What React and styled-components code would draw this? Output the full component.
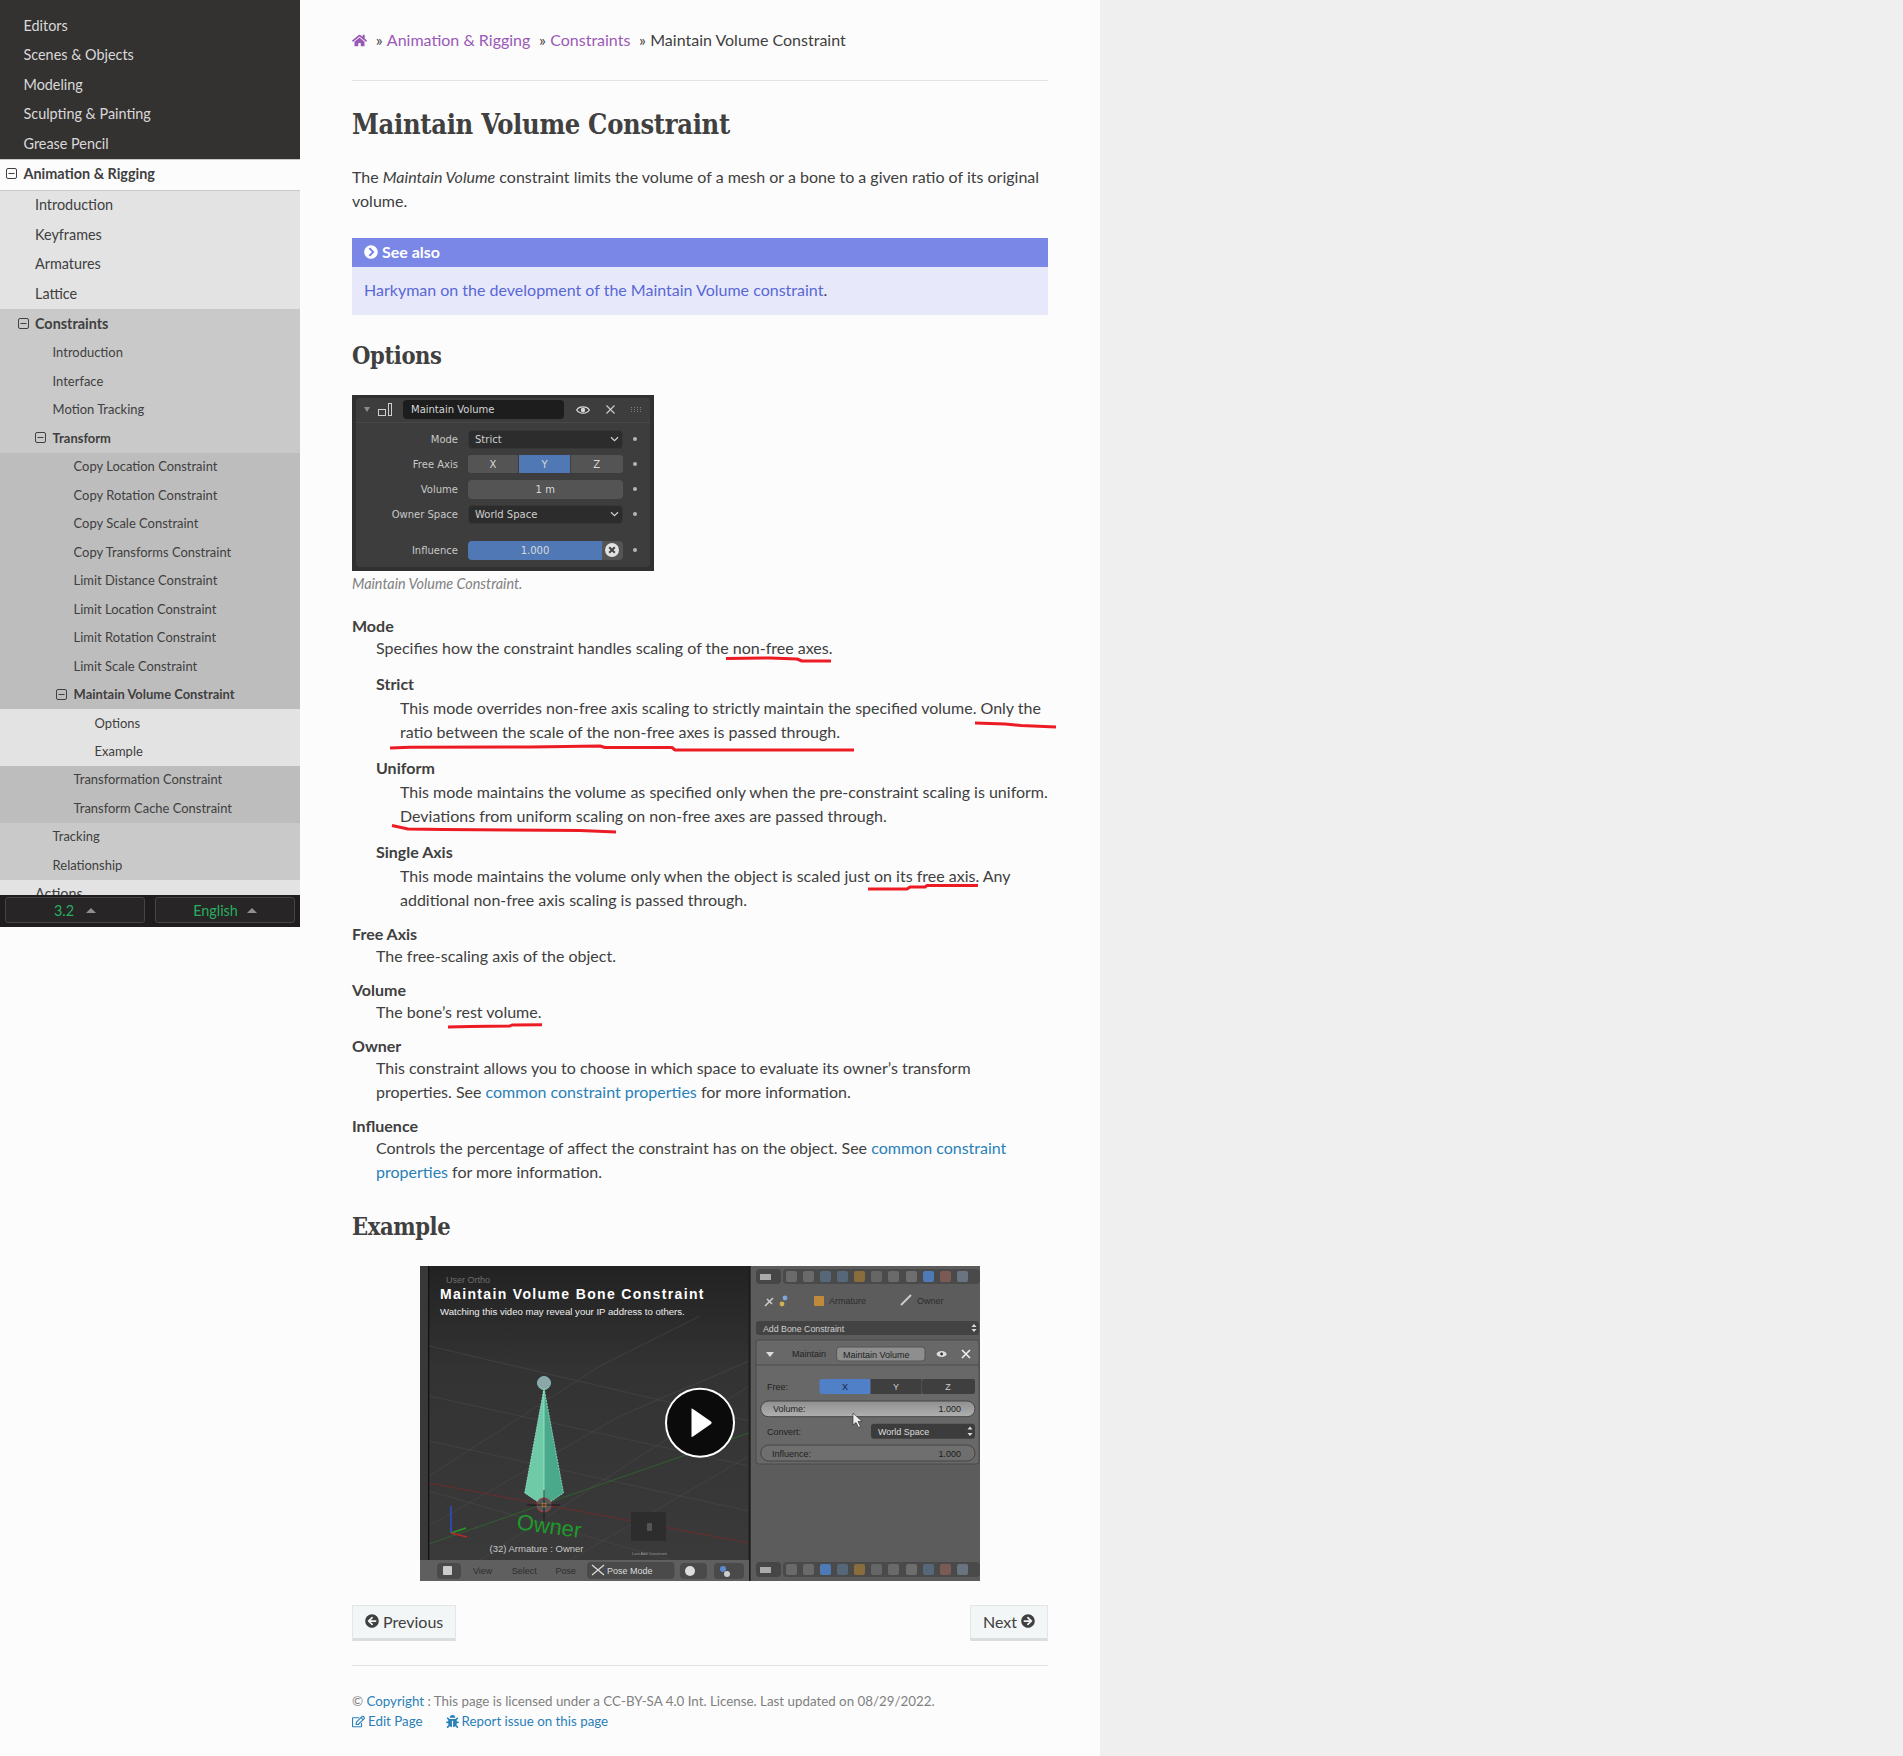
import React from "react";
import styled, { createGlobalStyle } from "styled-components";
import { FaHome, FaChevronCircleRight, FaArrowCircleLeft, FaArrowCircleRight, FaRegEdit, FaBug } from "react-icons/fa";

const Global = createGlobalStyle`
  html, body { margin: 0; padding: 0; background: #fcfcfc; }
  body { font-family: Lato, "Liberation Sans", sans-serif; font-size: 16px; color: #404040; }
`;

const Page = styled.div`
  display: flex;
  align-items: flex-start;
  min-height: 1756px;
`;

/* ---------- sidebar ---------- */
const Sidebar = styled.nav`
  display: flex;
  flex-direction: column;
  flex: 0 0 300px;
  width: 300px;
  height: 927px;
`;
const NavScroll = styled.div`
  flex: 1;
  min-height: 0;
  overflow: hidden;
  padding-top: 11px;
  background: #343131;
`;
const styles = {
  dark: { bg: "#343131", c: "#d9d9d9", fs: 14.4, pl: 23.5, pt: 5.5, pb: 6.1 },
  l1cur: { bg: "#fcfcfc", c: "#404040", fs: 14.4, pl: 23.5, pt: 5, pb: 6.7, b: 1, border: 1 },
  l2: { bg: "#e3e3e3", c: "#404040", fs: 14.4, pl: 35, pt: 5.5, pb: 6.1 },
  l2cur: { bg: "#c9c9c9", c: "#404040", fs: 14.4, pl: 35, pt: 5.5, pb: 6.1, b: 1 },
  l3: { bg: "#c9c9c9", c: "#404040", fs: 12.96, pl: 52.6, pt: 4.8, pb: 5.68 },
  l3cur: { bg: "#c9c9c9", c: "#404040", fs: 12.96, pl: 52.6, pt: 4.8, pb: 5.68, b: 1 },
  l4: { bg: "#bdbdbd", c: "#404040", fs: 12.96, pl: 73.6, pt: 4.8, pb: 5.68 },
  l4cur: { bg: "#bdbdbd", c: "#404040", fs: 12.96, pl: 73.6, pt: 4.8, pb: 5.68, b: 1 },
  l5: { bg: "#e3e3e3", c: "#404040", fs: 12.96, pl: 94.6, pt: 4.8, pb: 5.68 },
};
const NavRow = styled.a`
  display: flex;
  align-items: center;
  line-height: 18px;
  white-space: nowrap;
  background: ${(p) => styles[p.$v].bg};
  color: ${(p) => styles[p.$v].c};
  font-size: ${(p) => styles[p.$v].fs}px;
  font-weight: ${(p) => (styles[p.$v].b ? 700 : 400)};
  padding: ${(p) => styles[p.$v].pt}px 8px ${(p) => styles[p.$v].pb}px ${(p) => styles[p.$v].pl}px;
  border-top: ${(p) => (styles[p.$v].border ? "1px solid #c9c9c9" : "0")};
  border-bottom: ${(p) => (styles[p.$v].border ? "1px solid #c9c9c9" : "0")};
`;
const Expander = styled.svg`
  width: 11px;
  height: 11px;
  margin-left: -17.5px;
  margin-right: 6.5px;
  flex: none;
`;
const MinusBox = () => (
  <Expander viewBox="0 0 11 11" fill="none" stroke="#404040" strokeWidth="1">
    <rect x="0.5" y="0.5" width="10" height="10" rx="1.5" />
    <path d="M2.5 5.5H8.5" />
  </Expander>
);
const VersionBar = styled.div`
  flex: 0 0 32px;
  display: flex;
  gap: 10px;
  padding: 2px 5px 4px;
  box-sizing: border-box;
  background: #1f1d1d;
`;
const VersionButton = styled.div`
  flex: 1;
  display: flex;
  align-items: center;
  justify-content: center;
  gap: ${(p) => p.$gap}px;
  background: #272525;
  border: 1px solid #454545;
  border-radius: 3px;
  color: #27ae60;
  font-size: 14.4px;
`;
const Caret = styled.span`
  width: 0;
  height: 0;
  border-left: 5px solid transparent;
  border-right: 5px solid transparent;
  border-bottom: 5px solid #8f8f8f;
`;

const navItems = [
  ["Editors", "dark"], ["Scenes & Objects", "dark"], ["Modeling", "dark"], ["Sculpting & Painting", "dark"], ["Grease Pencil", "dark"],
  ["Animation & Rigging", "l1cur", 1],
  ["Introduction", "l2"], ["Keyframes", "l2"], ["Armatures", "l2"], ["Lattice", "l2"],
  ["Constraints", "l2cur", 1],
  ["Introduction", "l3"], ["Interface", "l3"], ["Motion Tracking", "l3"],
  ["Transform", "l3cur", 1],
  ["Copy Location Constraint", "l4"], ["Copy Rotation Constraint", "l4"], ["Copy Scale Constraint", "l4"], ["Copy Transforms Constraint", "l4"],
  ["Limit Distance Constraint", "l4"], ["Limit Location Constraint", "l4"], ["Limit Rotation Constraint", "l4"], ["Limit Scale Constraint", "l4"],
  ["Maintain Volume Constraint", "l4cur", 1],
  ["Options", "l5"], ["Example", "l5"],
  ["Transformation Constraint", "l4"], ["Transform Cache Constraint", "l4"],
  ["Tracking", "l3"], ["Relationship", "l3"],
  ["Actions", "l2"],
];

/* ---------- main ---------- */
const Content = styled.main`
  position: relative;
  flex: 0 0 800px;
  width: 800px;
  box-sizing: border-box;
  padding: 28px 52px 0;
  background: #fcfcfc;
  align-self: stretch;
`;
const Filler = styled.div`
  flex: 1;
  align-self: stretch;
  background: #efefef;
`;
const Crumbs = styled.div`
  display: flex;
  align-items: center;
  line-height: 24px;
  white-space: pre;
`;
const CrumbLink = styled.a`
  color: #9b59b6;
`;
const HomeIcon = styled(FaHome)`
  display: block;
`;
const CrumbSep = styled.span`
  margin: 0 4.3px 0 8.7px;
`;
const Rule = styled.hr`
  border: 0;
  border-top: 1px solid #e1e4e5;
  margin: ${(p) => p.$top}px 0 0;
`;
const H1 = styled.h1`
  font-family: "DejaVu Serif Condensed", "DejaVu Serif", serif;
  font-stretch: condensed;
  font-size: 27px;
  letter-spacing: -0.3px;
  line-height: 34px;
  font-weight: 700;
  margin: 27px 0 0;
  white-space: nowrap;
`;
const H2 = styled.h2`
  font-family: "DejaVu Serif Condensed", "DejaVu Serif", serif;
  font-stretch: condensed;
  font-size: 23.5px;
  letter-spacing: -0.4px;
  line-height: 30px;
  font-weight: 700;
  margin: ${(p) => p.$top}px 0 ${(p) => p.$bottom}px;
`;
const Para = styled.p`
  line-height: 24px;
  margin: 23px 0 0;
`;
const Admonition = styled.aside`
  margin-top: 25px;
  background: #e7e9fa;
`;
const AdmonitionTitle = styled.div`
  display: flex;
  align-items: center;
  gap: 4px;
  height: 29px;
  box-sizing: border-box;
  padding: 0 0 2px 12px;
  background: #7a87e6;
  color: #fff;
  font-weight: 700;
  font-size: 16px;
`;
const AdmonitionBody = styled.div`
  padding: 11px 12px 13px;
  line-height: 24px;
`;
const AdLink = styled.a`
  color: #5967d6;
`;
const Caption = styled.div`
  margin-top: 4px;
  font-style: italic;
  font-size: 14.4px;
  line-height: 18px;
  color: #808080;
`;
const DefList = styled.dl`
  margin: ${(p) => p.$top}px 0 0;
`;
const Term = styled.dt`
  font-weight: 700;
  line-height: 20px;
`;
const Desc = styled.dd`
  margin: ${(p) => (p.$nested ? "2px 0 14px 24px" : "0 0 12px 24px")};
  line-height: 24px;
  &:last-child { margin-bottom: ${(p) => (p.$nested ? "0" : "12px")}; }
`;
const Inner = styled.dl`
  margin: 14px 0 0;
`;
const Link = styled.a`
  color: #2980b9;
`;
const VideoFrame = styled.svg`
  display: block;
  width: 560px;
  height: 315px;
  margin: 0 auto;
`;
const NavButtons = styled.div`
  display: flex;
  justify-content: space-between;
  margin-top: 24px;
`;
const PagerButton = styled.a`
  display: flex;
  align-items: center;
  gap: 4px;
  box-sizing: border-box;
  height: 36px;
  padding: 0 12px 5px;
  background: #f3f6f6;
  color: #404040;
  border: 1px solid #e3e6e6;
  border-bottom: 0;
  box-shadow: inset 0 -3px 0 #d9dddd;
  font-size: 16px;
`;
const Footer = styled.footer`
  margin-top: 25.3px;
  font-size: 13.33px;
  line-height: 20px;
  color: #808080;
`;
const FootLinks = styled.div`
  display: flex;
  gap: 23px;
`;
const FootLink = styled.a`
  display: inline-flex;
  align-items: center;
  gap: 3px;
  color: #2980b9;
`;
const Scribbles = styled.svg`
  position: absolute;
  left: 0;
  top: 0;
  width: 800px;
  height: 1756px;
  pointer-events: none;
`;

/* ---------- blender panel ---------- */
const Blender = styled.div`
  width: 302px;
  height: 176px;
  box-sizing: border-box;
  padding: 3px 4px 4px;
  background: #303030;
  font-family: "DejaVu Sans", sans-serif;
  font-size: 10px;
  color: #d9d9d9;
`;
const BlenderInner = styled.div`
  height: 100%;
  background: #3d3d3d;
  border-radius: 3px;
`;
const BlenderHeader = styled.div`
  display: flex;
  align-items: center;
  height: 25px;
  border-bottom: 1px solid #474747;
  box-sizing: border-box;
  padding-left: 8px;
`;
const BlenderName = styled.div`
  width: 161px;
  height: 19px;
  box-sizing: border-box;
  margin-left: 11px;
  padding-left: 8px;
  line-height: 19px;
  background: #1d1d1d;
  border-radius: 4px;
  color: #d6d6d6;
`;
const HeadIcon = styled.svg`
  flex: none;
  margin-left: ${(p) => p.$ml || 0}px;
`;
const BlenderRows = styled.div`
  display: flex;
  flex-direction: column;
  gap: 6px;
  padding-top: 7px;
`;
const BlenderRow = styled.div`
  display: grid;
  grid-template-columns: 102px 154.5px 20px;
  column-gap: 10px;
  align-items: center;
  height: 19px;
  margin-top: ${(p) => p.$mt || 0}px;
`;
const BlenderLabel = styled.span`
  text-align: right;
  color: #c8c8c8;
`;
const Dot = styled.span`
  width: 4px;
  height: 4px;
  border-radius: 50%;
  background: #b5b5b5;
`;
const Dropdown = styled.div`
  display: flex;
  align-items: center;
  justify-content: space-between;
  height: 19px;
  box-sizing: border-box;
  padding: 0 3px 0 6px;
  background: #2c2c2c;
  border: 1px solid #373737;
  border-radius: 4px;
  color: #cfcfcf;
`;
const Segments = styled.div`
  display: grid;
  grid-template-columns: 50px 51px 1fr;
  gap: 1px;
  height: 18px;
  border-radius: 3px;
  overflow: hidden;
`;
const Segment = styled.div`
  display: flex;
  align-items: center;
  justify-content: center;
  background: ${(p) => (p.$on ? "#5078b5" : "#545454")};
`;
const NumberField = styled.div`
  display: flex;
  align-items: center;
  justify-content: center;
  height: 19px;
  background: #545454;
  border-radius: 4px;
`;
const SliderField = styled.div`
  display: grid;
  grid-template-columns: 134px 1fr;
  height: 19px;
  border-radius: 4px;
  overflow: hidden;
`;
const SliderFill = styled.div`
  display: flex;
  align-items: center;
  justify-content: center;
  background: #5078b5;
`;
const SliderClear = styled.div`
  display: flex;
  align-items: center;
  justify-content: center;
  background: #545454;
`;

const Chevron = () => (
  <svg width="9" height="6" viewBox="0 0 9 6" fill="none" stroke="#d0d0d0" strokeWidth="1.2"><path d="M1 1.2L4.5 4.6L8 1.2" /></svg>
);

const BlenderPanel = () => (
  <Blender>
    <BlenderInner>
      <BlenderHeader>
        <svg width="6" height="5" viewBox="0 0 6 5"><path d="M0 0H6L3 5Z" fill="#8c8c8c" /></svg>
        <HeadIcon $ml={8} width="14" height="14" viewBox="0 0 14 14" fill="none" stroke="#cfcfcf">
          <rect x="0.5" y="6.5" width="7" height="6" />
          <rect x="10.5" y="0.5" width="3" height="12" />
        </HeadIcon>
        <BlenderName>Maintain Volume</BlenderName>
        <HeadIcon $ml={12} width="14" height="10" viewBox="0 0 14 10">
          <path d="M0.7 5C3 0.8 11 0.8 13.3 5C11 9.2 3 9.2 0.7 5Z" fill="none" stroke="#d8d8d8" strokeWidth="1.3" />
          <circle cx="7" cy="5" r="2.2" fill="#d8d8d8" />
        </HeadIcon>
        <HeadIcon $ml={16} width="9" height="9" viewBox="0 0 9 9" stroke="#cfcfcf" strokeWidth="1.1"><path d="M.5.5L8.5 8.5M8.5.5L.5 8.5" /></HeadIcon>
        <HeadIcon $ml={16} width="11" height="5" viewBox="0 0 11 5" fill="#7d7d7d">
          {[0, 3, 6, 9].flatMap((x) => [0, 2, 4].map((y) => <rect key={`${x}${y}`} x={x} y={y} width="1" height="1" />))}
        </HeadIcon>
      </BlenderHeader>
      <BlenderRows>
        <BlenderRow><BlenderLabel>Mode</BlenderLabel><Dropdown>Strict<Chevron /></Dropdown><Dot /></BlenderRow>
        <BlenderRow>
          <BlenderLabel>Free Axis</BlenderLabel>
          <Segments><Segment>X</Segment><Segment $on>Y</Segment><Segment>Z</Segment></Segments>
          <Dot />
        </BlenderRow>
        <BlenderRow><BlenderLabel>Volume</BlenderLabel><NumberField>1 m</NumberField><Dot /></BlenderRow>
        <BlenderRow><BlenderLabel>Owner Space</BlenderLabel><Dropdown>World Space<Chevron /></Dropdown><Dot /></BlenderRow>
        <BlenderRow $mt={11}>
          <BlenderLabel>Influence</BlenderLabel>
          <SliderField>
            <SliderFill>1.000</SliderFill>
            <SliderClear>
              <svg width="14" height="14" viewBox="0 0 14 14">
                <circle cx="7" cy="7" r="7" fill="#e2e2e2" />
                <path d="M4.2 4.2L9.8 9.8M9.8 4.2L4.2 9.8" stroke="#444" strokeWidth="2" />
              </svg>
            </SliderClear>
          </SliderField>
          <Dot />
        </BlenderRow>
      </BlenderRows>
    </BlenderInner>
  </Blender>
);

/* ---------- video poster drawing ---------- */
const toolbarXs = [371, 388, 405, 422, 439, 456, 473, 491, 508, 525, 542];
const toolColors = ["#6a6a6a", "#6a6a6a", "#56677a", "#56677a", "#8a6d3c", "#666", "#6a6a6a", "#6e6e6e", "#56677a", "#7a5a55", "#6a7480"];

const Toolbar = ({ y, active }) => (
  <g>
    <rect x="336" y={y - 7} width="25" height="15" rx="4" fill="#464646" />
    <rect x="340" y={y - 2} width="11" height="6" fill="#aaa" />
    <rect x="363" y={y - 7} width="197" height="15" rx="4" fill="#4a4a4a" />
    {toolbarXs.map((x, i) => (
      <rect key={x} x={x - 5} y={y - 5} width="11" height="11" rx="2" fill={i === active ? "#4f7ab8" : toolColors[i]} />
    ))}
  </g>
);

const VideoPoster = () => (
  <VideoFrame viewBox="0 0 560 315">
    <defs>
      <linearGradient id="topShade" x1="0" y1="0" x2="0" y2="1">
        <stop offset="0" stopColor="#222" />
        <stop offset="0.35" stopColor="#333" />
        <stop offset="1" stopColor="#3a3a3a" />
      </linearGradient>
      <linearGradient id="pill" x1="0" y1="0" x2="0" y2="1">
        <stop offset="0" stopColor="#8f8f8f" />
        <stop offset="1" stopColor="#b0b0b0" />
      </linearGradient>
    </defs>
    <rect width="560" height="315" fill="#5c5c5c" />
    <rect width="9" height="295" fill="#383838" />
    <rect x="9" width="320" height="294" fill="url(#topShade)" />
    <g stroke="#4a4a4a" strokeWidth="0.6" fill="none">
      <path d="M9 80L329 155M9 130L329 200M9 175L329 245M9 225L250 294" />
      <path d="M9 260L200 150L329 95M60 294L329 120M150 294L329 190M9 210L180 100L280 50" />
    </g>
    <path d="M9 217L329 277" stroke="#7a2a2a" strokeWidth="0.8" fill="none" />
    <path d="M9 278L329 167" stroke="#2f6a2f" strokeWidth="0.8" fill="none" />
    <rect x="8" width="1.3" height="294" fill="#111" />
    <rect x="328.6" width="2" height="315" fill="#1c1c1c" />

    <path d="M124 122L104.7 227L124 240Z" fill="#6fcaa8" />
    <path d="M124 122L143.5 227L124 240Z" fill="#4aa98a" />
    <path d="M124 122V240" stroke="#9fe8d0" strokeWidth="0.8" />
    <path d="M124 122L104.7 227L124 240L143.5 227Z" fill="none" stroke="#a8f0dc" strokeWidth="0.7" strokeDasharray="2 1" />
    <circle cx="124" cy="117" r="6.5" fill="#8fa6a8" stroke="#7fd8d0" strokeWidth="0.8" />
    <circle cx="124" cy="239" r="7" fill="#50595c" stroke="#a04040" strokeWidth="1.2" />
    <circle cx="124" cy="239" r="2.5" fill="#d68a3a" />
    <path d="M107 239H140M124 224V255" stroke="#111" strokeWidth="0.8" />

    <text x="96" y="263" transform="rotate(8 96 263)" fontFamily="Liberation Sans" fontSize="22" fill="#1f9a2a">Owner</text>
    <text x="69.5" y="286" fontFamily="Liberation Sans" fontSize="9.5" fill="#c8c8c8">(32) Armature : Owner</text>
    <path d="M31 267V240" stroke="#2a4fd0" strokeWidth="1.5" />
    <path d="M31 267L46 262" stroke="#2a9a2a" strokeWidth="1.5" />
    <path d="M31 267L47 271" stroke="#b52a2a" strokeWidth="1.5" />
    <rect x="211" y="246" width="35" height="29" fill="#2d2d2d" />
    <rect x="227" y="257" width="5" height="8" rx="1" fill="#555" />
    <text x="212" y="289" fontFamily="Liberation Sans" fontSize="4" fill="#999">Last Add Constraint</text>

    <text x="26" y="17" fontFamily="Liberation Sans" fontSize="9" fill="#6e6e6e">User Ortho</text>
    <text x="20" y="33" fontFamily="Liberation Sans" fontWeight="700" fontSize="14" letterSpacing="1.35" fill="#fff">Maintain Volume Bone Constraint</text>
    <text x="20" y="49" fontFamily="Liberation Sans" fontSize="9.6" fill="#eee">Watching this video may reveal your IP address to others.</text>

    {/* bottom bar, left */}
    <rect x="0" y="294" width="329" height="21" fill="#5f5f5f" />
    <rect x="17" y="297" width="24" height="16" rx="4" fill="#4a4a4a" />
    <rect x="23" y="300" width="9" height="9" rx="1" fill="#ccc" />
    <g fontFamily="Liberation Sans" fontSize="9" fill="#2e2e2e">
      <text x="53" y="308">View</text>
      <text x="91.7" y="308">Select</text>
      <text x="135.4" y="308">Pose</text>
    </g>
    <rect x="167" y="296" width="87.5" height="17" rx="4" fill="#4a4a4a" />
    <path d="M172 299L184 309M184 299L172 309" stroke="#ddd" strokeWidth="1.2" />
    <text x="187" y="308" fontFamily="Liberation Sans" fontSize="9" fill="#ddd">Pose Mode</text>
    <rect x="260" y="297" width="27" height="16" rx="4" fill="#4a4a4a" />
    <circle cx="270" cy="305" r="5" fill="#ddd" />
    <rect x="294" y="297" width="30" height="16" rx="4" fill="#4a4a4a" />
    <circle cx="303" cy="303" r="3" fill="#5c8ad0" />
    <circle cx="307" cy="308" r="3" fill="#cfcfcf" />

    {/* right panel */}
    <Toolbar y={10} active={8} />
    <Toolbar y={303} active={2} />
    <g fontFamily="Liberation Sans" fontSize="9" fill="#2c2c2c">
      <path d="M345 40L353 32M347 33L352 38" stroke="#ccc" strokeWidth="1.6" />
      <circle cx="365" cy="32" r="2.4" fill="#7fa8d8" />
      <circle cx="362" cy="38" r="2.4" fill="#d0b050" />
      <rect x="394" y="30" width="10" height="10" rx="1" fill="#c08a3c" />
      <text x="409" y="38">Armature</text>
      <path d="M481 39L491 29" stroke="#ccc" strokeWidth="2" />
      <text x="497" y="38">Owner</text>
    </g>
    <rect x="336" y="55" width="223" height="14" rx="3" fill="#434343" />
    <text x="343" y="65.5" fontFamily="Liberation Sans" fontSize="8.8" fill="#d0d0d0">Add Bone Constraint</text>
    <path d="M554 58L556.5 61H551.5ZM554 66L556.5 63H551.5Z" fill="#ddd" />

    <rect x="336" y="74" width="223" height="124" rx="3" fill="#686868" stroke="#4a4a4a" />
    <path d="M336 99H559" stroke="#4c4c4c" />
    <path d="M346 86H354L350 91Z" fill="#ddd" />
    <text x="372" y="91" fontFamily="Liberation Sans" fontSize="9" fill="#222">Maintain</text>
    <rect x="416.6" y="81" width="88.4" height="14" rx="3" fill="#8e8e8e" stroke="#555" />
    <text x="423" y="92" fontFamily="Liberation Sans" fontSize="9" fill="#1e1e1e">Maintain Volume</text>
    <ellipse cx="521.6" cy="88" rx="5" ry="3" fill="#ddd" />
    <circle cx="521.6" cy="88" r="1.4" fill="#333" />
    <path d="M542 84L550 92M550 84L542 92" stroke="#eee" strokeWidth="1.6" />

    <text x="347" y="124" fontFamily="Liberation Sans" fontSize="9" fill="#222">Free:</text>
    <rect x="399.5" y="113" width="51" height="15" rx="2" fill="#4f80c8" />
    <rect x="450.6" y="113" width="51" height="15" fill="#3f3f3f" />
    <rect x="502" y="113" width="53" height="15" rx="2" fill="#3f3f3f" />
    <g fontFamily="Liberation Sans" fontSize="9" textAnchor="middle">
      <text x="425" y="124" fill="#14233a">X</text>
      <text x="476" y="124" fill="#ccc">Y</text>
      <text x="528" y="124" fill="#ccc">Z</text>
    </g>
    <rect x="340.7" y="135" width="214.3" height="15.7" rx="7.8" fill="url(#pill)" stroke="#444" />
    <text x="353" y="146" fontFamily="Liberation Sans" fontSize="9" fill="#1e1e1e">Volume:</text>
    <text x="541" y="146" textAnchor="end" fontFamily="Liberation Sans" fontSize="9" fill="#1e1e1e">1.000</text>
    <path d="M433 147V159L436 156.5L438.5 161.5L440.5 160.5L438 155.5L442 155.5Z" fill="#eee" stroke="#222" strokeWidth="0.6" />
    <text x="347" y="169" fontFamily="Liberation Sans" fontSize="9" fill="#222">Convert:</text>
    <rect x="451" y="157.7" width="104" height="15" rx="3" fill="#3c3c3c" />
    <text x="458" y="169" fontFamily="Liberation Sans" fontSize="9" fill="#ddd">World Space</text>
    <path d="M550 160.5L552.5 163.5H547.5ZM550 170L552.5 167H547.5Z" fill="#ddd" />
    <rect x="340.7" y="179" width="214.3" height="16" rx="8" fill="#6f6f6f" stroke="#444" />
    <text x="352" y="190.5" fontFamily="Liberation Sans" fontSize="9" fill="#1e1e1e">Influence:</text>
    <text x="541" y="190.5" textAnchor="end" fontFamily="Liberation Sans" fontSize="9" fill="#1e1e1e">1.000</text>

    {/* play button */}
    <circle cx="280" cy="156.7" r="34" fill="#0b0b0b" stroke="#fff" strokeWidth="2" />
    <path d="M271.5 143.5Q271 142 273 143L291 155.5Q292.5 156.7 291 158L273 170.5Q271 171.5 271.5 170Z" fill="#fff" />
  </VideoFrame>
);

const App = () => (
  <>
    <Global />
    <Page>
      <Sidebar>
        <NavScroll>
          {navItems.map(([t, v, exp], i) => (
            <NavRow key={i} $v={v}>
              {exp ? <MinusBox /> : null}
              {t}
            </NavRow>
          ))}
        </NavScroll>
        <VersionBar>
          <VersionButton $gap={12}>3.2<Caret /></VersionButton>
          <VersionButton $gap={9}>English<Caret /></VersionButton>
        </VersionBar>
      </Sidebar>
      <Content>
        <Crumbs>
          <CrumbLink><HomeIcon size={15} /></CrumbLink>
          <CrumbSep>»</CrumbSep>
          <CrumbLink>Animation &amp; Rigging</CrumbLink>
          <CrumbSep>»</CrumbSep>
          <CrumbLink>Constraints</CrumbLink>
          <CrumbSep>»</CrumbSep>
          <span>Maintain Volume Constraint</span>
        </Crumbs>
        <Rule $top={28} />
        <H1>Maintain Volume Constraint</H1>
        <Para>The <em>Maintain Volume</em> constraint limits the volume of a mesh or a bone to a given ratio of its original volume.</Para>
        <Admonition>
          <AdmonitionTitle><FaChevronCircleRight size={14} />See also</AdmonitionTitle>
          <AdmonitionBody><AdLink>Harkyman on the development of the Maintain Volume constraint</AdLink>.</AdmonitionBody>
        </Admonition>
        <H2 $top={25.6} $bottom={24.4}>Options</H2>
        <BlenderPanel />
        <Caption>Maintain Volume Constraint.</Caption>
        <DefList $top={22.7}>
          <Term>Mode</Term>
          <Desc>
            Specifies how the constraint handles scaling of the non-free axes.
            <Inner>
              <Term>Strict</Term>
              <Desc $nested>This mode overrides non-free axis scaling to strictly maintain the specified volume. Only the ratio between the scale of the non-free axes is passed through.</Desc>
              <Term>Uniform</Term>
              <Desc $nested>This mode maintains the volume as specified only when the pre-constraint scaling is uniform. Deviations from uniform scaling on non-free axes are passed through.</Desc>
              <Term>Single Axis</Term>
              <Desc $nested>This mode maintains the volume only when the object is scaled just on its free axis. Any additional non-free axis scaling is passed through.</Desc>
            </Inner>
          </Desc>
          <Term>Free Axis</Term>
          <Desc>The free-scaling axis of the object.</Desc>
          <Term>Volume</Term>
          <Desc>The bone’s rest volume.</Desc>
          <Term>Owner</Term>
          <Desc>This constraint allows you to choose in which space to evaluate its owner’s transform properties. See <Link>common constraint properties</Link> for more information.</Desc>
          <Term>Influence</Term>
          <Desc>Controls the percentage of affect the constraint has on the object. See <Link>common constraint properties</Link> for more information.</Desc>
        </DefList>
        <H2 $top={28.5} $bottom={24}>Example</H2>
        <VideoPoster />
        <NavButtons>
          <PagerButton><FaArrowCircleLeft size={14} />Previous</PagerButton>
          <PagerButton>Next<FaArrowCircleRight size={14} /></PagerButton>
        </NavButtons>
        <Rule $top={24} />
        <Footer>
          <div>© <Link>Copyright</Link> : This page is licensed under a CC-BY-SA 4.0 Int. License. Last updated on 08/29/2022.</div>
          <FootLinks>
            <FootLink><FaRegEdit size={13} />Edit Page</FootLink>
            <FootLink><FaBug size={13} />Report issue on this page</FootLink>
          </FootLinks>
        </Footer>
        <Scribbles viewBox="300 0 800 1756" fill="none" stroke="#ed1c24" strokeWidth="3" strokeLinejoin="round">
          <path d="M726 658.5L770 658L797 659L802 661L831 661" />
          <path d="M975 723L1005 724L1021 725.5L1056 727" />
          <path d="M390 748L410 747.3L530 747L600 746L605 747.5L672 747.5L675 750L854 750" />
          <path d="M392 825.5L408 829L443 829.5L580 830.5L616 832" />
          <path d="M868 889L907 889L910 887L925 887L927 885.5L978 885.5" />
          <path d="M448 1027L470 1026.5L510 1026L512 1025L542 1024.7" />
        </Scribbles>
      </Content>
      <Filler />
    </Page>
  </>
);

export default App;
